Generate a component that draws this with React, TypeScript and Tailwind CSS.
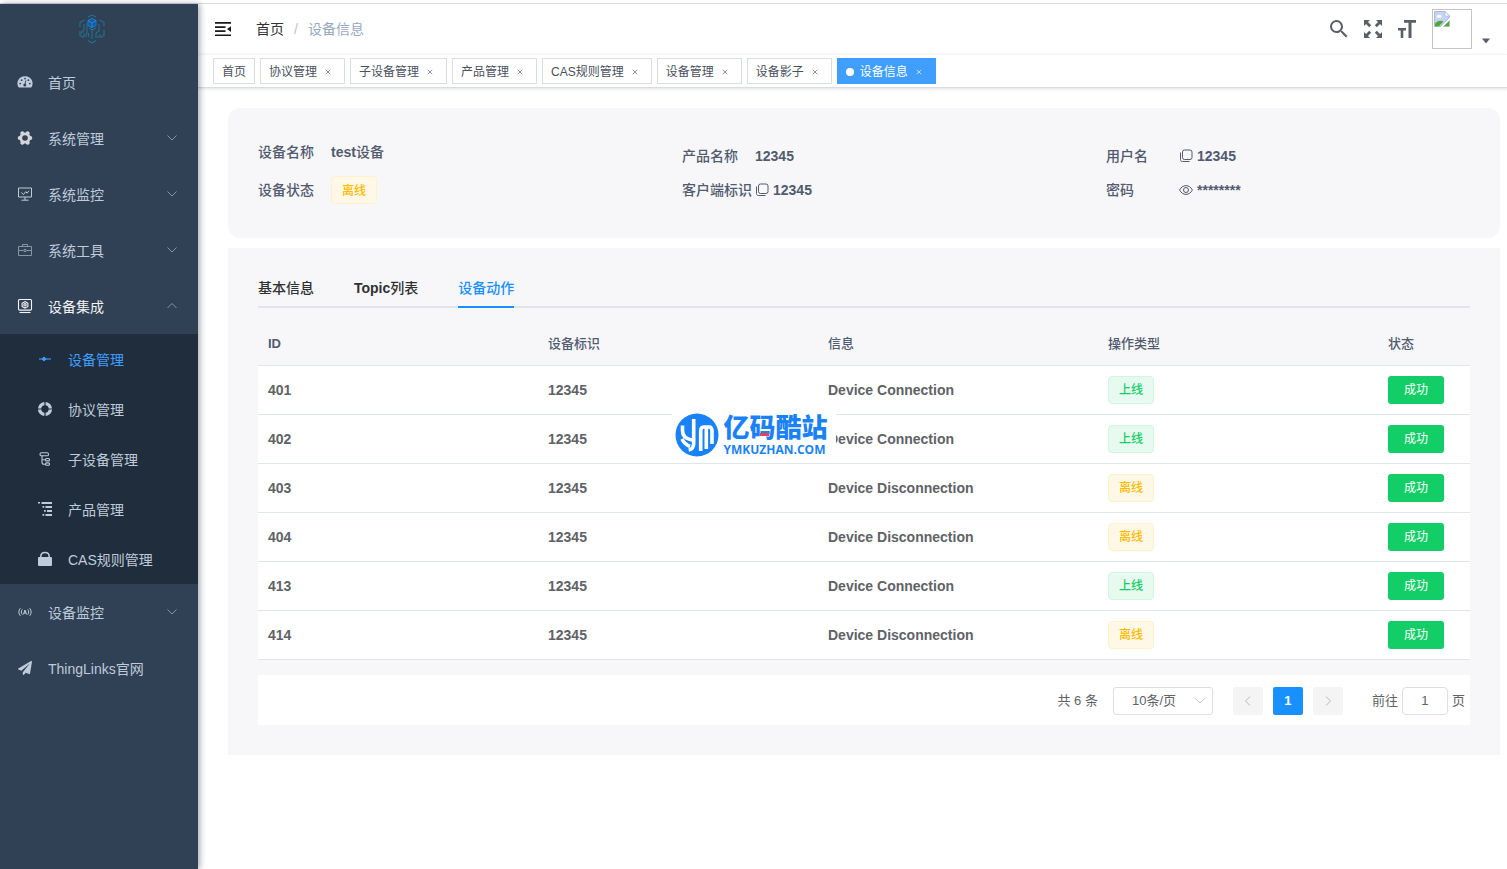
import React from 'react';
import { FaPaperPlane } from 'react-icons/fa';
import { MdSearch } from 'react-icons/md';

interface MenuEntry {
  label: string;
  icon: React.ReactNode;
  arrow?: 'down' | 'up';
  children?: MenuEntry[];
  active?: boolean;
}

interface ActionRow {
  id: number;
  device: string;
  message: string;
  online: boolean;
}

const ROWS: ActionRow[] = [
  { id: 401, device: '12345', message: 'Device Connection', online: true },
  { id: 402, device: '12345', message: 'Device Connection', online: true },
  { id: 403, device: '12345', message: 'Device Disconnection', online: false },
  { id: 404, device: '12345', message: 'Device Disconnection', online: false },
  { id: 413, device: '12345', message: 'Device Connection', online: true },
  { id: 414, device: '12345', message: 'Device Disconnection', online: false },
];

const VISITED = ['首页', '协议管理', '子设备管理', '产品管理', 'CAS规则管理', '设备管理', '设备影子', '设备信息'];

/* ---------- icons ---------- */

function DashboardIcon() {
  return (
    <svg className="w-4 h-4" viewBox="0 0 16 16">
      <path fill="currentColor" d="M8 2.2a7.2 7.2 0 0 0-6.3 11.2h12.6A7.2 7.2 0 0 0 8 2.2z" />
      <g fill="#304156">
        <circle cx="8" cy="4.6" r="0.9" />
        <circle cx="4.6" cy="6.2" r="0.9" />
        <circle cx="11.4" cy="6.2" r="0.9" />
        <circle cx="3.2" cy="9.6" r="0.9" />
        <circle cx="12.8" cy="9.6" r="0.9" />
        <circle cx="7.8" cy="11" r="1.5" />
      </g>
      <path stroke="#304156" strokeWidth="0.9" d="M7.8 11l1.1-4.6" />
    </svg>
  );
}

function GearIcon() {
  return (
    <svg className="w-4 h-4" viewBox="0 0 16 16">
      <circle cx="8" cy="8" r="5.6" fill="#d3d5d9" />
      <path
        stroke="#d3d5d9"
        strokeWidth="4"
        strokeLinecap="round"
        d="M2.7 8h10.6M5.3 3.3l5.4 9.4M10.7 3.3l-5.4 9.4"
      />
      <circle cx="8" cy="8" r="2.8" fill="#304156" />
    </svg>
  );
}

function MonitorIcon() {
  return (
    <svg className="w-4 h-4" viewBox="0 0 16 16" fill="none" stroke="currentColor" strokeWidth="1">
      <path d="M1.5 2h13v9h-13zM8 11v3M4.5 14.2h7M4.2 6.4l2.2 2.2 2.4-3 1.2 1.6 2-2.4" />
    </svg>
  );
}

function ToolboxIcon() {
  return (
    <svg className="w-4 h-4 opacity-60" viewBox="0 0 16 16" fill="none" stroke="currentColor" strokeWidth="1">
      <path d="M1.5 4.5h13v9h-13zM5.5 4.5v-2h5v2M1.5 8.5h5M9.5 8.5h5M7 7.5h2v2H7z" />
    </svg>
  );
}

function IntegrationIcon() {
  return (
    <svg className="w-4 h-4" viewBox="0 0 16 16" fill="none" stroke="currentColor" strokeWidth="1.1">
      <rect x="1.5" y="1.5" width="13" height="10.6" rx="1" />
      <path d="M8 3.6l2.9 1.6v3.2L8 10 5.1 8.4V5.2z" />
      <circle cx="8" cy="6.8" r="1.2" />
      <path d="M2.5 14.5h11" />
    </svg>
  );
}

function NodeIcon() {
  return (
    <svg className="w-4 h-4" viewBox="0 0 16 16">
      <path stroke="currentColor" strokeWidth="1.1" d="M2 8h12" />
      <path fill="currentColor" d="M4.6 8L7 5.6 9.6 8 7 10.4z" />
    </svg>
  );
}

function RingIcon() {
  return (
    <svg className="w-4 h-4" viewBox="0 0 16 16" fill="none">
      <circle cx="8" cy="8" r="5.4" stroke="currentColor" strokeWidth="3.4" />
      <path stroke="#1f2d3d" strokeWidth="1.2" d="M8 0v5M8 11v5M0 8h5M11 8h5" />
    </svg>
  );
}

function BranchIcon() {
  return (
    <svg className="w-4 h-4" viewBox="0 0 16 16" fill="none" stroke="currentColor" strokeWidth="1.1">
      <rect x="3" y="1.8" width="8.5" height="3" rx="1.4" />
      <path d="M5 4.8v6.4c0 1.2.6 2 2 2h1.5M5 8.8h3.5" />
      <rect x="8.5" y="7.5" width="4" height="2.4" rx="1" />
      <rect x="8.5" y="11.9" width="4" height="2.4" rx="1" />
    </svg>
  );
}

function TreeListIcon() {
  return (
    <svg className="w-4 h-4" viewBox="0 0 16 16" fill="currentColor">
      <path d="M1 1h2v1.5H1zM4.5 1H15v2H4.5zM5.5 5h1.8v1.8H5.5zM8.5 5H15v2H8.5zM7 9h1.8v1.8H7zM10 9h5v2h-5zM5.5 13h1.8v1.8H5.5zM8.5 13H15v2H8.5z" />
    </svg>
  );
}

function LockIcon() {
  return (
    <svg className="w-4 h-4" viewBox="0 0 16 16">
      <rect x="1" y="6" width="14" height="9" rx="1" fill="currentColor" />
      <path d="M3.8 7V5.6c0-2.5 1.800-4.200 4.200-4.200s4.200 1.700 4.200 4.200V7" fill="none" stroke="currentColor" strokeWidth="1.5" />
    </svg>
  );
}

function SignalIcon() {
  return (
    <svg className="w-4 h-4" viewBox="0 0 16 16" fill="none" stroke="currentColor" strokeWidth="1">
      <path d="M3.4 4.2c-2 2.2-2 5.4 0 7.6M5.3 5.4c-1.3 1.6-1.3 3.6 0 5.2M12.6 4.2c2 2.2 2 5.4 0 7.6M10.7 5.4c1.3 1.6 1.3 3.6 0 5.2M6.4 10.4L8 6l1.6 4.4M7 9h2" />
    </svg>
  );
}

function ChevronIcon({ direction }: { direction: 'down' | 'up' | 'left' | 'right' }) {
  const paths = {
    down: 'M1.5 3.5L6 8l4.5-4.5',
    up: 'M1.5 8L6 3.5 10.5 8',
    left: 'M8 1.5L3.5 6 8 10.5',
    right: 'M4 1.5L8.5 6 4 10.5',
  };
  return (
    <svg className="w-3 h-3" viewBox="0 0 12 12" fill="none" stroke="currentColor" strokeWidth="1">
      <path d={paths[direction]} />
    </svg>
  );
}

function FoldIcon() {
  return (
    <svg className="w-4 h-4" viewBox="0 0 16 16" fill="#1a1a1a">
      <path d="M0 1h16v1.7H0zM0 5.2h10.5v1.7H0zM0 9.3h10.5V11H0zM0 13.4h16v1.7H0zM16 5.2v5.8L12 8.1z" />
    </svg>
  );
}

function FullscreenIcon() {
  return (
    <svg className="w-5 h-5" viewBox="0 0 20 20" fill="currentColor">
      <path d="M1 1h6L5 3l3.2 3.2-2 2L3 5 1 7zM19 1v6l-2-2-3.2 3.2-2-2L15 3l-2-2zM1 19v-6l2 2 3.2-3.2 2 2L5 17l2 2zM19 19h-6l2-2-3.2-3.2 2-2L17 15l2-2z" />
    </svg>
  );
}

function FontSizeIcon() {
  return (
    <svg className="w-[18px] h-[18px]" viewBox="0 0 18 18" fill="currentColor">
      <path d="M6 0h12v2.8h-4.5V18h-3V2.8H6zM0 8h8v2.6H5.3V18H2.7v-7.4H0z" />
    </svg>
  );
}

function CopyIcon() {
  return (
    <svg className="w-[14px] h-[14px]" viewBox="0 0 14 14" fill="none" stroke="currentColor" strokeWidth="1">
      <rect x="3.5" y="1" width="9.5" height="9.5" rx="2" />
      <path d="M1.5 3.5v7c0 1.3.7 2 2 2h7" />
    </svg>
  );
}

function EyeIcon() {
  return (
    <svg className="w-[14px] h-[14px]" viewBox="0 0 14 14" fill="none" stroke="currentColor" strokeWidth="1">
      <path d="M.6 7C2 4.2 4.4 2.6 7 2.6S12 4.2 13.4 7C12 9.8 9.6 11.4 7 11.4S2 9.8.6 7z" />
      <circle cx="7" cy="7" r="2.5" />
    </svg>
  );
}

function BrokenImageIcon() {
  return (
    <svg className="w-4 h-4" viewBox="0 0 16 16">
      <path fill="#c3d4f5" stroke="#a3b1c9" strokeWidth="0.8" d="M.5.5H11L15.5 5v1.5l-9 9h-6z" />
      <path fill="#fff" stroke="#a3b1c9" strokeWidth="0.6" d="M11 .5V5h4.5z" />
      <ellipse cx="5" cy="5.4" rx="2.6" ry="1.3" fill="#fff" />
      <path fill="#4ea832" d="M1 15.2v-2.4c2-2.6 5-4 8.5-2.4l-4.6 4.8z" />
      <path fill="#4ea832" stroke="#a3b1c9" strokeWidth="0.5" d="M15.5 9.5v6h-6z" />
    </svg>
  );
}

function Logo() {
  return (
    <svg className="w-8 h-8" viewBox="0 0 32 32" fill="none" strokeWidth="1.1">
      <g stroke="#25708f">
        <path d="M12 4l4-2 4 2M8.5 7L4 9.5V14M23.5 7L28 9.5V13M4 18v4.5l3.5 2M28 17v5.5l-3.5 2M12 27.5l4 2.5 4-2.5" />
        <path d="M8 11v6l-3 3M8 20v4M11 10v10l-1.5 4M12.5 20v4M16 16v10M13.5 15l2.5 2 4-2M20 20v5M20 20l3-2v-7M24 21v3h-3" />
      </g>
      <path fill="#12589c" stroke="#1976c5" d="M16 5.5l4 2.2v4.6l-4 2.2-4-2.2V7.7z" />
      <path stroke="#3a9be8" strokeWidth="0.7" d="M12 7.7l4 2.3 4-2.3M16 10v4.5" />
    </svg>
  );
}

const MENU: MenuEntry[] = [
  { label: '首页', icon: <DashboardIcon /> },
  { label: '系统管理', icon: <GearIcon />, arrow: 'down' },
  { label: '系统监控', icon: <MonitorIcon />, arrow: 'down' },
  { label: '系统工具', icon: <ToolboxIcon />, arrow: 'down' },
  {
    label: '设备集成',
    icon: <IntegrationIcon />,
    arrow: 'up',
    children: [
      { label: '设备管理', icon: <NodeIcon />, active: true },
      { label: '协议管理', icon: <RingIcon /> },
      { label: '子设备管理', icon: <BranchIcon /> },
      { label: '产品管理', icon: <TreeListIcon /> },
      { label: 'CAS规则管理', icon: <LockIcon /> },
    ],
  },
  { label: '设备监控', icon: <SignalIcon />, arrow: 'down' },
  { label: 'ThingLinks官网', icon: <FaPaperPlane className="w-[14px] h-[14px] mx-px" /> },
];

/* ---------- layout parts ---------- */

function Sidebar() {
  return (
    <aside className="w-[198px] flex-shrink-0 bg-[#304156] text-[#bfcbd9] text-sm shadow-[2px_0_6px_rgba(0,21,41,0.35)] z-10">
      <a href="#" aria-label="ThingLinks" className="h-[50px] flex items-center justify-center pr-[14px]">
        <Logo />
      </a>
      <nav>
        {MENU.map((item) => (
          <div key={item.label}>
            <a
              href="#"
              className={`h-14 flex items-center pl-[17px] pr-5 ${item.children ? 'text-[#f4f4f5]' : ''}`}
            >
              {item.icon}
              <span className="flex-1 ml-[15px] pt-[2px]">{item.label}</span>
              {item.arrow && (
                <span className="text-[#8592a3]">
                  <ChevronIcon direction={item.arrow} />
                </span>
              )}
            </a>
            {item.children && (
              <div className="bg-[#1f2d3d]">
                {item.children.map((child) => (
                  <a
                    key={child.label}
                    href="#"
                    className={`h-[50px] flex items-center pl-[37px] ${child.active ? 'text-[#409eff]' : 'text-[#bfcbd9]'}`}
                  >
                    {child.icon}
                    <span className="ml-[15px] pt-[2px]">{child.label}</span>
                  </a>
                ))}
              </div>
            )}
          </div>
        ))}
      </nav>
    </aside>
  );
}

function Navbar() {
  return (
    <header className="h-[50px] flex items-center pl-[17px] pr-[17px] bg-white">
      <button aria-label="收起菜单">
        <FoldIcon />
      </button>
      <nav className="flex-1 flex items-center gap-[10px] ml-[25px] text-sm">
        <a href="#" className="text-[#303133]">首页</a>
        <span className="text-[#c0c4cc]">/</span>
        <span className="text-[#97a8be]">设备信息</span>
      </nav>
      <div className="flex items-center text-[#5a5e66]">
        <button aria-label="搜索" className="mr-3">
          <MdSearch className="w-6 h-6" />
        </button>
        <button aria-label="全屏" className="mr-[15px]">
          <FullscreenIcon />
        </button>
        <button aria-label="布局大小" className="mr-4">
          <FontSizeIcon />
        </button>
        <button aria-label="用户头像" className="flex items-end gap-[10px]">
          <span className="w-10 h-10 border border-[#c4c4c4] p-px">
            <BrokenImageIcon />
          </span>
          <svg className="w-2 h-3" viewBox="0 0 8 12" fill="currentColor">
            <path d="M0 1.5h8l-4 5z" />
          </svg>
        </button>
      </div>
    </header>
  );
}

function TagsView() {
  return (
    <div className="h-[34px] flex items-center gap-[5px] pl-[15px] bg-white border-t border-[#f3f3f3] border-b border-b-[#d8dce5] shadow-[0_1px_3px_rgba(0,0,0,0.12)] text-xs">
      {VISITED.map((title, i) => {
        const active = i === VISITED.length - 1;
        return (
          <span
            key={title}
            className={`h-[26px] flex items-center px-2 pt-[2px] border whitespace-nowrap ${
              active ? 'bg-[#409eff] border-[#409eff] text-white' : 'bg-white border-[#d8dce5] text-[#495060]'
            }`}
          >
            {active && <span className="w-2 h-2 rounded-full bg-white mr-[6px]" />}
            <a href="#">{title}</a>
            {i > 0 && (
              <button aria-label={`关闭${title}`} className="w-4 h-4 ml-[3px] flex items-center justify-center opacity-70">
                <svg className="w-[6px] h-[6px]" viewBox="0 0 6 6" stroke="currentColor" strokeWidth="0.9">
                  <path d="M.8.8l4.4 4.4M5.2.8L.8 5.2" />
                </svg>
              </button>
            )}
          </span>
        );
      })}
    </div>
  );
}

function StatusTag({ online }: { online: boolean }) {
  return (
    <span
      className={`inline-flex items-center h-7 px-[10px] pt-px border rounded text-xs font-medium ${
        online ? 'bg-[#e7faf0] border-[#d0f5e0] text-[#13ce66]' : 'bg-[#fff8e6] border-[#fff1cc] text-[#ffba00]'
      }`}
    >
      {online ? '上线' : '离线'}
    </span>
  );
}

function Field({ label, children }: { label: string; children: React.ReactNode }) {
  return (
    <div className="flex items-center min-h-6">
      <dt className="min-w-[73px] pr-[3px] font-medium">{label}</dt>
      <dd className="flex items-center gap-1 font-bold">{children}</dd>
    </div>
  );
}

function DeviceSummary() {
  return (
    <section className="grid grid-cols-3 pb-[34px] bg-[#f7f7fa] rounded-xl text-sm text-[#515a6e]">
      <dl className="pl-[30px] pt-[30px] flex flex-col gap-[10px]">
        <div className="flex items-center h-7">
          <dt className="w-[73px] font-medium">设备名称</dt>
          <dd className="font-bold">test<span className="font-medium">设备</span></dd>
        </div>
        <div className="flex items-center h-7">
          <dt className="w-[73px] font-medium">设备状态</dt>
          <dd><StatusTag online={false} /></dd>
        </div>
      </dl>
      <dl className="pl-[30px] pt-9 flex flex-col gap-[10px]">
        <Field label="产品名称">12345</Field>
        <Field label="客户端标识">
          <CopyIcon />
          12345
        </Field>
      </dl>
      <dl className="pl-[30px] pt-9 flex flex-col gap-[10px]">
        <Field label="用户名">
          <CopyIcon />
          12345
        </Field>
        <Field label="密码">
          <EyeIcon />
          ********
        </Field>
      </dl>
    </section>
  );
}

function ActionTable() {
  return (
    <table className="w-full table-fixed text-left mt-[14px]">
      <colgroup>
        <col />
        <col />
        <col />
        <col />
        <col className="w-[92px]" />
      </colgroup>
      <thead>
        <tr className="h-[43px] border-b border-[#dfe6ec] text-[13px] text-[#515a6e]">
          <th className="px-[10px] font-bold">ID</th>
          <th className="px-[10px] font-medium">设备标识</th>
          <th className="px-[10px] font-medium">信息</th>
          <th className="px-[10px] font-medium">操作类型</th>
          <th className="px-[10px] font-medium">状态</th>
        </tr>
      </thead>
      <tbody>
        {ROWS.map((row) => (
          <tr key={row.id} className="h-[49px] bg-white border-b border-[#dfe6ec] text-sm font-bold text-[#606266]">
            <td className="px-[10px]">{row.id}</td>
            <td className="px-[10px]">{row.device}</td>
            <td className="px-[10px]">{row.message}</td>
            <td className="px-[10px]"><StatusTag online={row.online} /></td>
            <td className="px-[10px]">
              <button className="block w-14 h-7 rounded-[3px] bg-[#13ce66] text-white text-xs font-normal">成功</button>
            </td>
          </tr>
        ))}
      </tbody>
    </table>
  );
}

function Pagination() {
  return (
    <div className="h-[50px] mt-[15px] pt-[2px] pr-[5px] flex items-center justify-end bg-white text-[13px] text-[#606266]">
      <span className="mr-[15px]">共 6 条</span>
      <div className="relative mr-5">
        <select
          aria-label="每页条数"
          className="w-[100px] h-7 pl-[18px] appearance-none border border-[#dcdfe6] rounded-[3px] bg-white"
        >
          <option>10条/页</option>
        </select>
        <span className="absolute right-[7px] top-2 text-[#c0c4cc] pointer-events-none">
          <ChevronIcon direction="down" />
        </span>
      </div>
      <div className="flex gap-[10px] mr-[29px]">
        <button disabled aria-label="上一页" className="w-[30px] h-7 flex items-center justify-center rounded-xs bg-[#f4f4f5] text-[#b4b8bf]">
          <ChevronIcon direction="left" />
        </button>
        <button className="w-[30px] h-7 rounded-xs bg-[#1890ff] text-white font-bold">1</button>
        <button disabled aria-label="下一页" className="w-[30px] h-7 flex items-center justify-center rounded-xs bg-[#f4f4f5] text-[#b4b8bf]">
          <ChevronIcon direction="right" />
        </button>
      </div>
      <label className="flex items-center gap-1">
        前往
        <input
          defaultValue="1"
          className="w-[46px] h-7 border border-[#dcdfe6] rounded text-center"
        />
        页
      </label>
    </div>
  );
}

function DeviceTabs() {
  return (
    <section className="mt-[10px] px-[30px] pt-5 pb-[30px] bg-[#f7f7fa]">
      <div role="tablist" className="flex gap-10 h-10 border-b-2 border-[#dfe4ed] text-sm font-medium text-[#303133]">
        <button role="tab" className="h-10">基本信息</button>
        <button role="tab" className="h-10"><span className="font-bold">Topic</span>列表</button>
        <button role="tab" aria-selected className="h-10 pt-[2px] border-b-2 border-[#1890ff] text-[#1890ff]">
          设备动作
        </button>
      </div>
      <ActionTable />
      <Pagination />
    </section>
  );
}

function Watermark() {
  return (
    <div className="fixed left-1/2 top-1/2 -translate-x-1/2 -translate-y-1/2 z-20 w-[164px] h-12 pl-[3px] flex items-center gap-[5px] bg-white pointer-events-none">
      <svg className="w-11 h-11 flex-shrink-0" viewBox="0 0 44 44">
        <circle cx="22" cy="22" r="21.5" fill="#1a82f7" />
        <g fill="none" stroke="#fff" strokeWidth="3.6">
          <path d="M7.5 12.5v5c0 5 3 8.500 9.500 9.500M18.700 6v24c0 4-2 6.500-5 7M7 26c2 4 4 6 8 7.500" />
          <path d="M25.700 38V18c0-2.500 1-4 2.800-4H34c2 0 3 1.500 3 4v13M31.300 14v22" />
        </g>
      </svg>
      <div className="relative text-[#1a82f7] whitespace-nowrap">
        <div className="text-[26px] leading-[30px] font-black">亿码酷站</div>
        <div className="text-xs leading-[14px] font-bold font-['Open_Sans',sans-serif]">YMKUZHAN.COM</div>
        <span className="absolute left-9 top-5 w-[9px] h-[3px] bg-[#e8434f]" />
      </div>
    </div>
  );
}

export default function App() {
  return (
    <div className="min-h-screen flex flex-col bg-white font-['Liberation_Sans','Noto_Sans_CJK_SC',sans-serif]">
      <div className="h-1 border-b border-[#dcdcdc]" />
      <div className="flex-1 flex">
        <Sidebar />
        <div className="flex-1 min-w-0">
          <Navbar />
          <TagsView />
          <main className="pl-[30px] pr-[7px] pt-5">
            <DeviceSummary />
            <DeviceTabs />
          </main>
        </div>
      </div>
      <Watermark />
    </div>
  );
}
